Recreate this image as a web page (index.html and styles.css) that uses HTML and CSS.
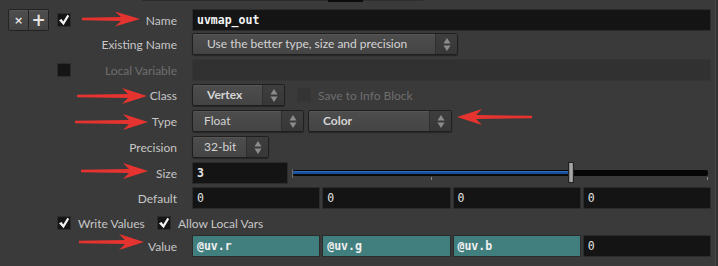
FILE: index.html
```html
<!DOCTYPE html>
<html lang="en">
<head>
    <meta charset="UTF-8">
    <title>Attribute Wrangle - uvmap_out</title>
    <link rel="stylesheet" href="styles.css">
</head>
<body>
<div class="panel">
    <div class="topline"><span class="seg seg-a"></span><span class="seg seg-b"></span><span class="seg seg-c"></span></div>

    <div class="row mb2">
        <div class="tools"><span class="tool tool-x">×</span><span class="tool tool-plus">+</span></div>
        <span class="check on"><svg width="12" height="12" viewBox="0 0 12 12"><path d="M1 6.2 L3.6 4.9 L5.2 7.6 L9.4 0.8 L11.2 2 L5.6 11.2 Z" fill="#f2f2f2"/></svg></span>
        <span class="lbl">Name</span>
        <div class="ctl"><div class="field b name">uvmap_out</div></div>
    </div>

    <div class="row">
        <span class="lbl">Existing Name</span>
        <div class="ctl">
            <div class="menu w-existing"><span class="menu-text pad-wide">Use the better type, size and precision</span><span class="menu-arrows"><svg width="8" height="13" viewBox="0 0 8 13"><path d="M4 0 L7.5 5.5 L0.5 5.5 Z M0.5 7.5 L7.5 7.5 L4 13 Z" fill="#8c8c8c"/></svg></span></div>
        </div>
    </div>

    <div class="row mb3">
        <span class="check"></span>
        <span class="lbl dim">Local Variable</span>
        <div class="ctl"><div class="field off"></div></div>
    </div>

    <div class="row">
        <span class="lbl">Class</span>
        <div class="ctl">
            <div class="menu w-class"><span class="menu-text pad-wide b">Vertex</span><span class="menu-arrows"><svg width="8" height="13" viewBox="0 0 8 13"><path d="M4 0 L7.5 5.5 L0.5 5.5 Z M0.5 7.5 L7.5 7.5 L4 13 Z" fill="#8c8c8c"/></svg></span></div>
            <span class="check ghost info-check"></span>
            <span class="dim info-text">Save to Info Block</span>
        </div>
    </div>

    <div class="row">
        <span class="lbl">Type</span>
        <div class="ctl gap4">
            <div class="menu w-type"><span class="menu-text">Float</span><span class="menu-arrows"><svg width="8" height="13" viewBox="0 0 8 13"><path d="M4 0 L7.5 5.5 L0.5 5.5 Z M0.5 7.5 L7.5 7.5 L4 13 Z" fill="#8c8c8c"/></svg></span></div>
            <div class="menu w-color"><span class="menu-text pad-wide b">Color</span><span class="menu-arrows"><svg width="8" height="13" viewBox="0 0 8 13"><path d="M4 0 L7.5 5.5 L0.5 5.5 Z M0.5 7.5 L7.5 7.5 L4 13 Z" fill="#8c8c8c"/></svg></span></div>
        </div>
    </div>

    <div class="row">
        <span class="lbl">Precision</span>
        <div class="ctl">
            <div class="menu w-precision"><span class="menu-text">32-bit</span><span class="menu-arrows"><svg width="8" height="13" viewBox="0 0 8 13"><path d="M4 0 L7.5 5.5 L0.5 5.5 Z M0.5 7.5 L7.5 7.5 L4 13 Z" fill="#8c8c8c"/></svg></span></div>
        </div>
    </div>

    <div class="row mb3">
        <span class="lbl">Size</span>
        <div class="ctl">
            <div class="field b w-size">3</div>
            <div class="slider">
                <div class="track"><div class="fill" style="width:66.6%"></div></div>
                <span class="knob" style="left:66.6%"></span>
                <span class="tick tick-mid"></span>
                <span class="tick tick-end"></span>
            </div>
        </div>
    </div>

    <div class="row mb3">
        <span class="lbl">Default</span>
        <div class="ctl">
            <div class="field">0</div>
            <div class="field">0</div>
            <div class="field">0</div>
            <div class="field">0</div>
        </div>
    </div>

    <div class="row row-checks mb1">
        <div class="checks">
            <span class="check on"><svg width="12" height="12" viewBox="0 0 12 12"><path d="M1 6.2 L3.6 4.9 L5.2 7.6 L9.4 0.8 L11.2 2 L5.6 11.2 Z" fill="#f2f2f2"/></svg></span>
            <span class="check-text first">Write Values</span>
            <span class="check on"><svg width="12" height="12" viewBox="0 0 12 12"><path d="M1 6.2 L3.6 4.9 L5.2 7.6 L9.4 0.8 L11.2 2 L5.6 11.2 Z" fill="#f2f2f2"/></svg></span>
            <span class="check-text">Allow Local Vars</span>
        </div>
    </div>

    <div class="row">
        <span class="lbl">Value</span>
        <div class="ctl">
            <div class="field teal b">@uv.r</div>
            <div class="field teal b">@uv.g</div>
            <div class="field teal b">@uv.b</div>
            <div class="field">0</div>
        </div>
    </div>

    <!-- flechas rojas de anotacion encima del panel -->
    <svg class="notes" width="718" height="266" viewBox="0 0 718 266">
        <g fill="#e5342f">
            <path transform="translate(82,19)" d="M0,-1.2 L39,-2 L33,-7.5 L58,0 L33,7.5 L39,2 L0,1.2 Z"/>
            <path transform="translate(77,96)" d="M0,-1.2 L51,-2 L45,-8 L70,0 L45,8 L51,2 L0,1.2 Z"/>
            <path transform="translate(75,122)" d="M0,-1.2 L54,-2 L48,-8 L73,0 L48,8 L54,2 L0,1.2 Z"/>
            <path transform="translate(81,171)" d="M0,-1.2 L48,-2 L42,-8 L67,0 L42,8 L48,2 L0,1.2 Z"/>
            <path transform="translate(79,242)" d="M0,-1.2 L46,-2 L40,-8 L65,0 L40,8 L46,2 L0,1.2 Z"/>
            <path transform="translate(532,117) scale(-1,1)" d="M0,-1.2 L56,-2 L50,-8 L75,0 L50,8 L56,2 L0,1.2 Z"/>
        </g>
    </svg>
</div>
</body>
</html>
```

FILE: styles.css
```css
body {
    margin: 0;
    background-color: #3a3a3a;
    font-family: Lato, "Open Sans", sans-serif;
    font-size: 12px;
    color: #c6c6c6;
}

.panel {
    position: relative;
    width: 718px;
    height: 266px;
    overflow: hidden;
    box-sizing: border-box;
    padding-left: 8px;
    box-shadow: inset -2px 0 0 #303030, inset -3px 0 0 #4a4a4a;
}

/* borde inferior de las pestanas de arriba */
.topline {
    display: flex;
    height: 2px;
    margin: 0 0 7px 134px;
}

.seg {
    height: 1px;
}

.seg-a {
    width: 186px;
    background-color: #2b2b2b;
}

.seg-b {
    width: 35px;
    height: 2px;
    background-color: #0c0c0c;
}

.seg-c {
    width: 60px;
    background-color: #2e2e2e;
}

.row {
    display: grid;
    grid-template-columns: 49px 13px 107px 15px 519px;
    align-items: center;
    height: 22px;
    margin-bottom: 4px;
}

.mb1 { margin-bottom: 1px; }
.mb2 { margin-bottom: 2px; }
.mb3 { margin-bottom: 3px; }

.tools {
    grid-column: 1;
    display: flex;
    width: 41px;
    height: 22px;
}

.tool {
    flex: 1;
    display: flex;
    align-items: center;
    justify-content: center;
    box-sizing: border-box;
    border: 1px solid #232323;
    background: linear-gradient(#4e4e4e, #424242);
    box-shadow: inset 0 1px 0 #575757;
    color: #e4e4e4;
    font-family: "DejaVu Sans", sans-serif;
    font-weight: bold;
}

.tool-x {
    font-size: 11px;
    border-radius: 2px 0 0 2px;
}

.tool-plus {
    font-size: 17px;
    border-left: none;
    border-radius: 0 2px 2px 0;
}

.check {
    grid-column: 2;
    display: flex;
    align-items: center;
    justify-content: center;
    width: 14px;
    height: 14px;
    box-sizing: border-box;
    background-color: #151515;
    border: 1px solid #2c2c2c;
}

.check.ghost {
    background-color: #343434;
    border-color: #363636;
}

.lbl {
    grid-column: 3;
    text-align: right;
    white-space: nowrap;
}

.dim {
    color: #6e6e6e;
}

.ctl {
    grid-column: 5;
    display: flex;
    align-items: center;
    gap: 2px;
    height: 22px;
}

.ctl.gap4 {
    gap: 4px;
}

.b {
    font-weight: bold;
}

/* menus desplegables */
.menu {
    display: flex;
    height: 22px;
    box-sizing: border-box;
    border: 1px solid #1f1f1f;
    border-radius: 2px;
    background: linear-gradient(#4d4d4d, #444);
    box-shadow: inset 0 1px 0 #565656, 0 1px 1px rgba(0, 0, 0, 0.35);
    color: #d4d4d4;
}

.menu-text {
    flex: 1;
    padding-left: 11px;
    line-height: 20px;
    white-space: nowrap;
    overflow: hidden;
}

.menu-text.pad-wide {
    padding-left: 14px;
}

.menu-arrows {
    width: 21px;
    display: flex;
    align-items: center;
    justify-content: center;
    border-left: 1px solid #2f2f2f;
    background: linear-gradient(#3e3e3e, #373737);
}

.w-existing { width: 266px; }
.w-class { width: 93px; }
.w-type { width: 112px; }
.w-color { width: 144px; }
.w-precision { width: 77px; }

.info-check {
    margin-left: 10px;
}

.info-text {
    margin-left: 5px;
}

/* campos de texto */
.field {
    flex: 1;
    height: 22px;
    box-sizing: border-box;
    border: 1px solid #2c2c2c;
    background-color: #141414;
    padding: 0 4px;
    font-family: "DejaVu Sans Mono", monospace;
    font-size: 11.5px;
    line-height: 20px;
    color: #e2e2e2;
    white-space: nowrap;
}

.field.name {
    color: #f4f4f4;
}

.field.off {
    background-color: #313131;
    border-color: #353535;
}

.field.teal {
    background-color: #417e7e;
    border-color: #2c2c2c;
    color: #f0f0f0;
}

.w-size {
    flex: 0 0 96px;
}

/* deslizador */
.slider {
    position: relative;
    flex: 1;
    height: 22px;
    margin-left: 2px;
}

.slider::before {
    content: "";
    position: absolute;
    left: 0;
    top: 7px;
    width: 1px;
    height: 9px;
    background-color: #6a6a6a;
}

.track {
    margin: 8px 3px 0 1px;
    height: 6px;
    background-color: #060606;
    border-radius: 2px;
}

.fill {
    height: 100%;
    border-radius: 2px 0 0 2px;
    background: linear-gradient(#0a0a0a 0 1px, #2a6cc0 1px 2px, #1b4f99 2px 4px, #0a0a0a 4px);
}

.knob {
    position: absolute;
    top: 0;
    width: 6px;
    height: 21px;
    margin-left: -3px;
    box-sizing: border-box;
    border: 1px solid #222;
    background: linear-gradient(90deg, #777, #b4b4b4, #808080);
}

.tick {
    position: absolute;
    top: 15px;
    width: 1px;
    height: 3px;
    background-color: #8a8a8a;
}

.tick-mid { left: 139px; }
.tick-end { left: 415px; }

/* fila de casillas */
.checks {
    grid-column: 2 / -1;
    display: flex;
    align-items: center;
}

.check-text {
    margin-left: 7px;
    white-space: nowrap;
}

.check-text.first {
    width: 72px;
    margin-right: 7px;
}

.notes {
    position: absolute;
    top: 0;
    left: 0;
    pointer-events: none;
}
```
